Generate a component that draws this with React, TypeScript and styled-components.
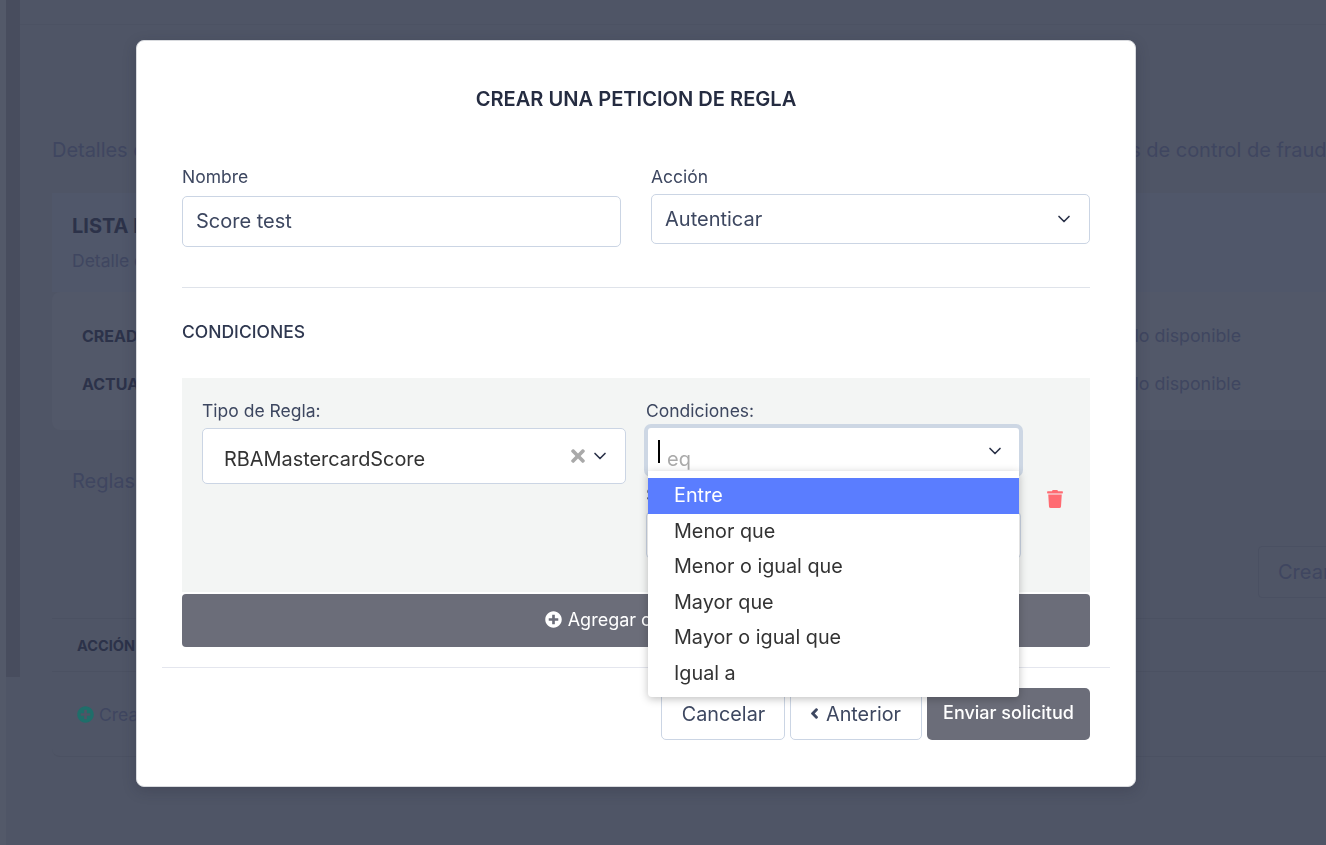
import styled, { createGlobalStyle } from 'styled-components';
import { ChevronDown } from 'lucide-react';
import { FaChevronLeft, FaPlusCircle, FaTimes, FaTrash } from 'react-icons/fa';

const GlobalStyle = createGlobalStyle`
  html, body {
    margin: 0;
    padding: 0;
    height: 845px;
    overflow: hidden;
    background: #4f5566;
    font-family: Inter, "Noto Sans", sans-serif;
  }
  * { box-sizing: border-box; }
`;

// Dimmed page behind the modal
const Page = styled.div`
  display: flex;
  width: 1326px;
  height: 845px;
  overflow: hidden;
  background: #4f5566;
  border-left: 6px solid #535969;
`;

const Rail = styled.div`
  flex: none;
  width: 14px;
  height: 677px;
  background: #484d5e;
`;

const Main = styled.main`
  flex: none;
  width: 1400px;
  margin-top: 24px;
  padding: 0 0 0 32px;
  border-top: 1px solid #4c5263;
`;

const Intro = styled.p`
  margin: 113px 0 0;
  font-size: 20px;
  line-height: 24px;
  letter-spacing: -0.03px;
  color: #3f4660;
  white-space: nowrap;
`;

const HeadCard = styled.section`
  margin-top: 31px;
  padding: 22px 20px 0;
  height: 99px;
  background: #50576a;
`;

const HeadTitle = styled.h3`
  margin: 0;
  font-size: 20px;
  line-height: 22px;
  font-weight: 700;
  color: #2c3249;
`;

const HeadText = styled.p`
  margin: 14px 0 0;
  font-size: 17.5px;
  line-height: 20px;
  color: #3f4660;
`;

const InfoCard = styled.section`
  height: 138px;
  padding: 20px 30px;
  background: #525869;
  border-radius: 8px;
`;

const InfoRow = styled.div`
  display: flex;
  justify-content: space-between;
  width: 1159px;
  height: 48px;
  line-height: 48px;
  font-size: 17.8px;
  color: #3f4660;
  b {
    font-size: 16px;
    font-weight: 700;
    color: #2c3249;
  }
`;

const RulesTitle = styled.p`
  margin: 39px 0 0 20px;
  font-size: 20px;
  line-height: 24px;
  color: #3f4660;
`;

const RulesCard = styled.section`
  margin-top: 53px;
  height: 211px;
  border-radius: 8px;
`;

const CreateWrap = styled.div`
  padding-left: 1206px;
`;

const CreateBtn = styled.div`
  width: 140px;
  height: 52px;
  padding: 0 19px;
  line-height: 50px;
  font-size: 20px;
  white-space: nowrap;
  color: #3f4660;
  border: 1px solid #4a5062;
  border-radius: 4px;
`;

const TableHead = styled.div`
  margin-top: 20px;
  height: 54px;
  padding-left: 25px;
  line-height: 54px;
  font-size: 14.5px;
  font-weight: 700;
  color: #2c3249;
  border-top: 1px solid #4b5162;
  border-bottom: 1px solid #4b5162;
`;

const TableRow = styled.div`
  display: flex;
  align-items: center;
  gap: 5px;
  height: 85px;
  padding-left: 25px;
  font-size: 17.5px;
  color: #3f4660;
  border-bottom: 1px solid #4b5162;
  border-radius: 0 0 8px 8px;
  svg {
    color: #1f6e6a;
  }
`;

// Modal
const Overlay = styled.div`
  position: fixed;
  inset: 0;
`;

const Modal = styled.div`
  width: 1000px;
  height: 747px;
  margin: 40px 0 0 136px;
  padding: 46px 45px 0;
  background: #fff;
  border: 1px solid #d8dade;
  border-radius: 8px;
  box-shadow: 0 4px 14px rgba(30, 34, 48, 0.22);
`;

const Title = styled.h2`
  margin: 0;
  text-align: center;
  font-size: 20.1px;
  line-height: 24px;
  font-weight: 600;
  color: #252c41;
`;

const TopFields = styled.div`
  display: grid;
  grid-template-columns: 439px 439px;
  gap: 30px;
  margin-top: 56px;
`;

const Label = styled.label`
  display: block;
  height: 20px;
  font-size: 17.5px;
  line-height: 20px;
  color: #3d4760;
`;

const TextInput = styled.div`
  display: flex;
  align-items: center;
  height: 51px;
  margin-top: 9px;
  padding: 0 13px 2px;
  font-size: 20px;
  color: #3d4760;
  background: #fff;
  border: 1px solid #cbd5e4;
  border-radius: 5px;
`;

const SelectInput = styled(TextInput)`
  justify-content: space-between;
  height: 50px;
  margin-top: 7px;
  padding: 0 15px 0 13px;
`;

const Divider = styled.hr`
  margin: 40px 0 0;
  border: 0;
  border-top: 1px solid #dfe3ea;
`;

const SectionTitle = styled.h4`
  margin: 34px 0 0;
  font-size: 17.5px;
  line-height: 20px;
  font-weight: 500;
  color: #2f3850;
`;

const RulePanel = styled.div`
  display: grid;
  grid-template-columns: 424px 375px 1fr;
  column-gap: 20px;
  height: 214px;
  margin-top: 36px;
  padding: 23px 0 0 20px;
  background: #f3f5f4;
`;

const RuleSelect = styled.div`
  display: flex;
  align-items: center;
  justify-content: space-between;
  height: 56px;
  margin-top: 7px;
  padding: 6px 15px 0 21px;
  font-size: 19.9px;
  color: #333;
  background: #fff;
  border: 1px solid #cbd5e4;
  border-radius: 5px;
`;

const SelectIcons = styled.span`
  display: flex;
  align-items: center;
  gap: 2px;
  margin-top: -6px;
  svg:first-child {
    color: #a9a9a9;
  }
  svg:last-child {
    color: #2a3148;
  }
`;

const ConditionField = styled.div`
  position: relative;
`;

const FocusedSelect = styled.div`
  position: relative;
  height: 45px;
  margin: 7px 2px 0;
  background: #fff;
  border-radius: 3px;
  box-shadow: 0 0 0 4px #cdd7e4;
`;

const Caret = styled.span`
  position: absolute;
  left: 10px;
  top: 12px;
  width: 2px;
  height: 23px;
  background: #000;
`;

const Placeholder = styled.span`
  position: absolute;
  left: 19px;
  top: 19px;
  font-size: 20px;
  line-height: 24px;
  color: #aaa;
`;

const CondChevron = styled(ChevronDown)`
  position: absolute;
  right: 14px;
  top: 13px;
  color: #2a3148;
`;

const ValueLabel = styled(Label)`
  margin-top: 12px;
`;

const ValueInput = styled.div`
  height: 46px;
  margin-top: 7px;
  background: #fff;
  border: 1px solid #cbd5e4;
  border-radius: 4px;
`;

const Menu = styled.ul`
  position: absolute;
  left: 2px;
  right: 2px;
  top: 70px;
  height: 226px;
  margin: 0;
  padding: 7px 0;
  list-style: none;
  background: #fff;
  border-radius: 0 0 4px 4px;
  box-shadow: 0 2px 8px rgba(0, 0, 0, 0.25);
`;

const MenuItem = styled.li<{ $active?: boolean }>`
  height: 35.5px;
  padding-left: 26px;
  font-size: 19.8px;
  line-height: 35px;
  color: ${({ $active }) => ($active ? '#fff' : '#333')};
  background: ${({ $active }) => ($active ? '#5a7dff' : 'transparent')};
`;

const TrashCol = styled.div`
  margin: 89px 0 0 5px;
  color: #ff6b72;
`;

const AddButton = styled.div`
  display: flex;
  align-items: center;
  justify-content: center;
  gap: 6px;
  height: 53px;
  margin-top: 2px;
  padding: 0 3px 3px 0;
  font-size: 18px;
  color: #fff;
  background: #6b6d79;
  border-radius: 4px;
`;

const FooterLine = styled.hr`
  margin: 20px -20px 0;
  border: 0;
  border-top: 1px solid #e4e6ee;
`;

const Footer = styled.div`
  display: flex;
  justify-content: flex-end;
  gap: 5px;
  margin-top: 20px;
`;

const OutlineBtn = styled.div<{ $w: number }>`
  display: flex;
  align-items: center;
  justify-content: center;
  gap: 6px;
  width: ${({ $w }) => $w}px;
  height: 52px;
  padding-right: 2px;
  font-size: 19.8px;
  color: #3d4760;
  background: #fff;
  border: 1px solid #cbd5e4;
  border-radius: 5px;
`;

const CancelBtn = styled(OutlineBtn)`
  padding: 0 0 0 1px;
`;

const BackIcon = styled(FaChevronLeft)`
  margin-top: -2px;
  stroke: currentColor;
  stroke-width: 50;
`;

const SubmitBtn = styled.div`
  display: flex;
  align-items: center;
  justify-content: center;
  width: 163px;
  height: 52px;
  padding-bottom: 4px;
  font-size: 18px;
  font-weight: 500;
  color: #fff;
  background: #6b6d79;
  border-radius: 5px;
`;

const options = ['Entre', 'Menor que', 'Menor o igual que', 'Mayor que', 'Mayor o igual que', 'Igual a'];

const App = () => (
  <>
    <GlobalStyle />
    <Page>
      <Rail />
      <Main>
        <Intro>Detalles de la lista negra con sus acciones y condiciones configuradas por cada banco para la gestión de las reglas de control de fraude</Intro>
        <HeadCard>
          <HeadTitle>LISTA NEGRA</HeadTitle>
          <HeadText>Detalle de la lista</HeadText>
        </HeadCard>
        <InfoCard>
          <InfoRow><b>CREADO</b><span>Solo disponible</span></InfoRow>
          <InfoRow><b>ACTUALIZADO</b><span>Solo disponible</span></InfoRow>
        </InfoCard>
        <RulesTitle>Reglas</RulesTitle>
        <RulesCard>
          <CreateWrap><CreateBtn>Crear regla</CreateBtn></CreateWrap>
          <TableHead>ACCIÓN</TableHead>
          <TableRow><FaPlusCircle size={17} />Crear</TableRow>
        </RulesCard>
      </Main>
    </Page>
    <Overlay>
      <Modal>
        <Title>CREAR UNA PETICION DE REGLA</Title>
        <TopFields>
          <div>
            <Label>Nombre</Label>
            <TextInput>Score test</TextInput>
          </div>
          <div>
            <Label>Acción</Label>
            <SelectInput>Autenticar<ChevronDown size={20} color="#2a3148" /></SelectInput>
          </div>
        </TopFields>
        <Divider />
        <SectionTitle>CONDICIONES</SectionTitle>
        <RulePanel>
          <div>
            <Label>Tipo de Regla:</Label>
            <RuleSelect>
              RBAMastercardScore
              <SelectIcons><FaTimes size={20} /><ChevronDown size={20} /></SelectIcons>
            </RuleSelect>
          </div>
          <ConditionField>
            <Label>Condiciones:</Label>
            <FocusedSelect>
              <Caret />
              <Placeholder>eq</Placeholder>
              <CondChevron size={20} />
            </FocusedSelect>
            <ValueLabel>Score:</ValueLabel>
            <ValueInput />
            <Menu>
              {options.map((o, i) => (
                <MenuItem key={o} $active={i === 0}>{o}</MenuItem>
              ))}
            </Menu>
          </ConditionField>
          <TrashCol><FaTrash size={18} /></TrashCol>
        </RulePanel>
        <AddButton><FaPlusCircle size={17} />Agregar condición</AddButton>
        <FooterLine />
        <Footer>
          <CancelBtn $w={124}>Cancelar</CancelBtn>
          <OutlineBtn $w={132}><BackIcon size={11} />Anterior</OutlineBtn>
          <SubmitBtn>Enviar solicitud</SubmitBtn>
        </Footer>
      </Modal>
    </Overlay>
  </>
);

export default App;
